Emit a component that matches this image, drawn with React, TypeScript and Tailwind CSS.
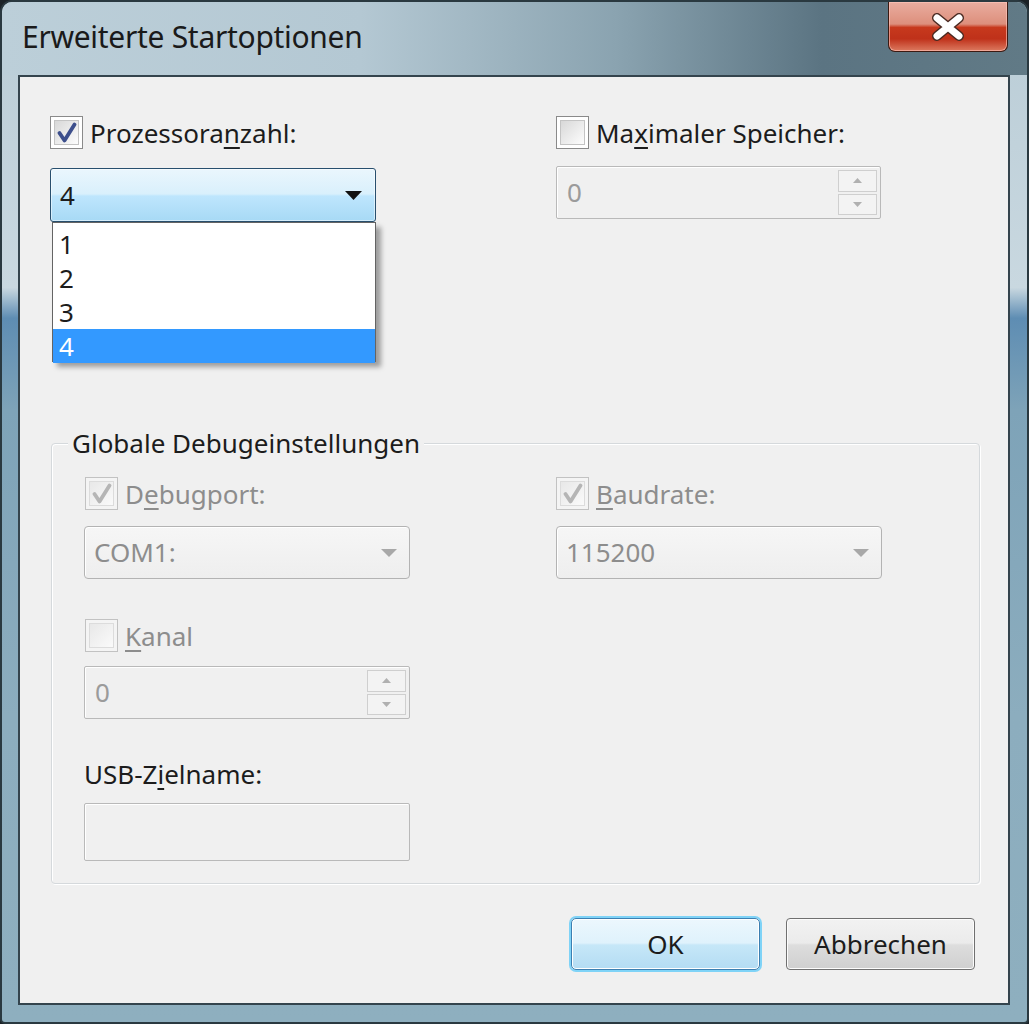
import React from "react";

function CheckBox({ checked, disabled }: { checked?: boolean; disabled?: boolean }) {
  return (
    <div
      className={
        disabled
          ? "w-[33px] h-[33px] shrink-0 border border-[#c2c2c2] p-[3px] bg-[#f4f4f4]"
          : "w-[33px] h-[33px] shrink-0 border border-[#8a8a8a] p-[3px] bg-white"
      }
    >
      <div
        className={
          disabled
            ? "w-full h-full border border-[#dcdcdc] bg-[linear-gradient(135deg,#e8e8e8,#fafafa)] flex items-center justify-center"
            : "w-full h-full border border-[#c4c4c4] bg-[linear-gradient(135deg,#d8d8d8,#fdfdfd)] flex items-center justify-center"
        }
      >
        {checked && (
          <svg width="22" height="22" viewBox="0 0 22 22">
            <path
              d="M3.5 11 L8.5 18.5 L18.5 2.5"
              fill="none"
              stroke={disabled ? "#b5b5b5" : "#3d4f8c"}
              strokeWidth="3.8"
              strokeLinecap="round"
              strokeLinejoin="round"
            />
          </svg>
        )}
      </div>
    </div>
  );
}

function Arrow({ color, w = 16, h = 8 }: { color: string; w?: number; h?: number }) {
  return (
    <svg width={w} height={h} viewBox={`0 0 ${w} ${h}`}>
      <polygon points={`0,0 ${w},0 ${w / 2},${h}`} fill={color} />
    </svg>
  );
}

function SpinButtons() {
  return (
    <div className="flex flex-col gap-[2px] w-[39px] h-full py-[3px]">
      <div className="flex-1 border border-[#cfcfcf] bg-[#f3f3f3] flex items-center justify-center">
        <svg width="9" height="5" viewBox="0 0 9 5">
          <polygon points="0,5 9,5 4.5,0" fill="#b0b0b0" />
        </svg>
      </div>
      <div className="flex-1 border border-[#cfcfcf] bg-[#f3f3f3] flex items-center justify-center">
        <svg width="9" height="5" viewBox="0 0 9 5">
          <polygon points="0,0 9,0 4.5,5" fill="#b0b0b0" />
        </svg>
      </div>
    </div>
  );
}

function DisabledSpin({ w }: { w: string }) {
  return (
    <div className={`${w} h-[53px] border border-[#b9b9b9] rounded-[2px] bg-[#f0f0f0] shadow-[inset_1px_1px_0_#fff] flex items-center pl-[10px] pr-[3px]`}>
      <span className="flex-1 text-[#9b9b9b]">0</span>
      <SpinButtons />
    </div>
  );
}

function DisabledCombo({ value }: { value: string }) {
  return (
    <div className="w-[326px] h-[53px] border border-[#b3b3b3] rounded-[4px] bg-[linear-gradient(to_bottom,#f6f6f6,#eeeeee)] shadow-[inset_1px_1px_0_#fff] flex items-center pl-[9px] pr-[12px]">
      <span className="flex-1 text-[#8d8d8d]">{value}</span>
      <Arrow color="#a8a8a8" w={16} h={8} />
    </div>
  );
}

export default function App() {
  return (
    <div className="w-[1029px] h-[1024px] bg-[#1b2227] font-['Noto_Sans','Open_Sans',sans-serif] text-[26px] text-[#1c1c1c] overflow-hidden">
      <div className="w-full h-full flex flex-col rounded-t-[12px] rounded-b-[5px] border-2 border-[#2a3940] bg-[linear-gradient(to_bottom,#b9ccd6_0%,#c9d8e0_28%,#5e8db3_31%,#7ea3b8_40%,#8cadbe_70%,#8eafbf_100%)]">
        {/* Title bar */}
        <div className="h-[73px] flex items-start bg-[linear-gradient(to_right,#bccfd9_0%,#b4c8d3_35%,#8aa3b0_60%,#5b7482_80%,#617a86_100%)] rounded-t-[10px]">
          <div className="flex-1 self-center pl-[20px] -mt-[4px] text-[30px] text-[#1a1a1a] tracking-[-0.3px]">
            Erweiterte Startoptionen
          </div>
          <div className="mr-[19px] w-[120px] h-[50px] rounded-b-[7px] border border-[#3b1a12] border-t-0 bg-[linear-gradient(to_bottom,#e9ada0_0%,#dd8f7c_45%,#c7391d_52%,#bf311a_75%,#dc7a60_100%)] shadow-[inset_0_0_0_1px_rgba(255,200,190,0.6)] flex items-center justify-center">
            <svg width="36" height="28" viewBox="0 0 36 28">
              <path d="M7 5 L29 23 M29 5 L7 23" stroke="#4a2a22" strokeWidth="10" strokeLinecap="round" />
              <path d="M7 5 L29 23 M29 5 L7 23" stroke="#ffffff" strokeWidth="7" strokeLinecap="round" />
            </svg>
          </div>
        </div>

        {/* Client area */}
        <div className="flex-1 ml-[16px] mr-[17px] mb-[17px] border-2 border-[#34444d] bg-[#f0f0f0] pt-[39px] pl-[30px] pr-[28px] flex flex-col">
          {/* Top section */}
          <div className="flex">
            <div className="w-[326px] flex flex-col">
              <div className="h-[33px] flex items-center gap-[7px]">
                <CheckBox checked />
                <span className="leading-none">
                  Prozessora<u className="underline-offset-[4px]">n</u>zahl:
                </span>
              </div>
              <div className="relative mt-[19px]">
                <div className="h-[54px] border border-[#284f6e] rounded-[3px] bg-[linear-gradient(to_bottom,#eaf6fd_0%,#d9f0fc_48%,#bee6fd_52%,#a7d9f5_100%)] shadow-[inset_0_0_0_1px_rgba(255,255,255,0.5)] flex items-center pl-[9px] pr-[13px]">
                  <span className="flex-1">4</span>
                  <Arrow color="#111111" w={17} h={9} />
                </div>
                <div className="absolute top-full left-[2px] right-0 h-[140px] bg-white border border-[#646464] shadow-[5px_5px_5px_rgba(0,0,0,0.35)] flex flex-col pt-[4px]">
                  <div className="h-[34px] flex items-center pl-[6px]">1</div>
                  <div className="h-[34px] flex items-center pl-[6px]">2</div>
                  <div className="h-[34px] flex items-center pl-[6px]">3</div>
                  <div className="h-[34px] flex items-center pl-[6px] bg-[#3399ff] text-white">4</div>
                </div>
              </div>
            </div>
            <div className="ml-[180px] w-[325px] flex flex-col">
              <div className="h-[33px] flex items-center gap-[7px]">
                <CheckBox />
                <span className="leading-none">
                  Ma<u className="underline-offset-[4px]">x</u>imaler Speicher:
                </span>
              </div>
              <div className="mt-[17px]">
                <DisabledSpin w="w-[325px]" />
              </div>
            </div>
          </div>

          {/* Group box */}
          <div className="mt-[221px] ml-[1px] h-[441px] border border-[#d5d9dc] rounded-[4px] shadow-[inset_1px_1px_0_#ffffff,1px_1px_0_#ffffff] flex flex-col pl-[32px]">
            <div className="-mt-[16px] -ml-[16px] w-fit px-[4px] bg-[#f0f0f0] leading-[30px]">
              Globale Debugeinstellungen
            </div>
            <div className="mt-[19px] flex">
              <div className="w-[326px] flex flex-col">
                <div className="h-[33px] flex items-center gap-[7px] ml-[1px]">
                  <CheckBox checked disabled />
                  <span className="leading-none text-[#8d8d8d]">
                    D<u className="underline-offset-[4px]">e</u>bugport:
                  </span>
                </div>
                <div className="mt-[16px]">
                  <DisabledCombo value="COM1:" />
                </div>
                <div className="mt-[40px] h-[33px] flex items-center gap-[7px] ml-[1px]">
                  <CheckBox disabled />
                  <span className="leading-none text-[#8d8d8d]">
                    <u className="underline-offset-[4px]">K</u>anal
                  </span>
                </div>
                <div className="mt-[14px]">
                  <DisabledSpin w="w-[326px]" />
                </div>
                <div className="mt-[40px] h-[30px] flex items-center">
                  USB-Z<u className="underline-offset-[4px]">i</u>elname:
                </div>
                <div className="mt-[14px] w-[326px] h-[58px] border border-[#b9b9b9] rounded-[2px] bg-[#f0f0f0] shadow-[inset_1px_1px_0_#fff]" />
              </div>
              <div className="ml-[146px] w-[325px] flex flex-col">
                <div className="h-[33px] flex items-center gap-[7px]">
                  <CheckBox checked disabled />
                  <span className="leading-none text-[#8d8d8d]">
                    <u className="underline-offset-[4px]">B</u>audrate:
                  </span>
                </div>
                <div className="mt-[16px]">
                  <DisabledCombo value="115200" />
                </div>
              </div>
            </div>
          </div>

          {/* Buttons */}
          <div className="mt-[34px] mr-[5px] flex justify-end gap-[26px]">
            <div className="w-[189px] h-[52px] rounded-[5px] border border-[#3c7fb1] bg-[linear-gradient(to_bottom,#ecf7fd_0%,#dff2fc_48%,#c6e7f8_52%,#b3dcf3_100%)] shadow-[0_0_0_2px_#7fd3f7,inset_0_0_0_1px_#ffffff] flex items-center justify-center">
              OK
            </div>
            <div className="w-[189px] h-[52px] rounded-[4px] border border-[#707070] bg-[linear-gradient(to_bottom,#f2f2f2_0%,#ebebeb_48%,#dddddd_52%,#cfcfcf_100%)] shadow-[inset_0_0_0_1px_#fcfcfc] flex items-center justify-center">
              Abbrechen
            </div>
          </div>
        </div>
      </div>
    </div>
  );
}
